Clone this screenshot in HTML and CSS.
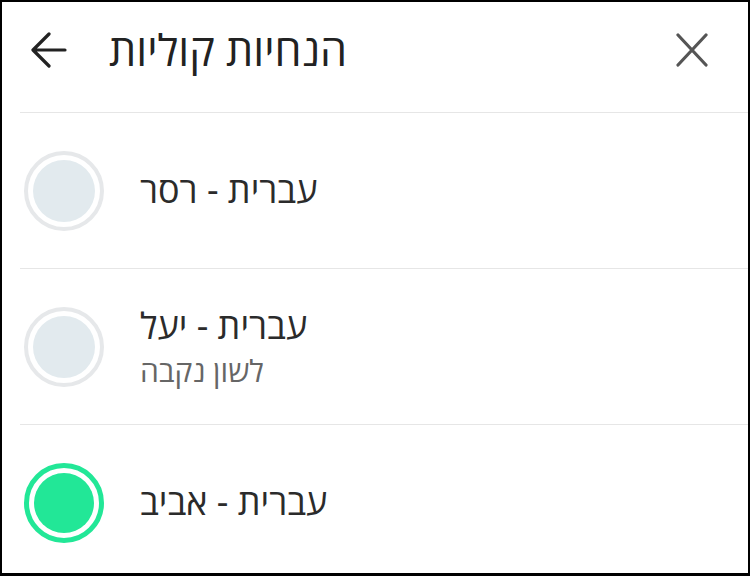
FILE: index.html
```html
<!DOCTYPE html>
<html lang="he">
  <head>
    <meta charset='utf-8' />
    <title>הנחיות קוליות</title>
    <link rel="stylesheet" href="styles.css">
  </head>
  <body>
    <main class='frame'>
      <header class='topbar'>
        <svg class='icon-back' width='36' height='36' viewBox='0 0 36 36'>
          <path d='M34 18H3M18 2L2 18l16 16' fill='none' stroke='#222' stroke-width='3.2' stroke-linecap='round' stroke-linejoin='round'/>
        </svg>
        <h1 class='title'>הנחיות קוליות</h1>
        <svg class='icon-close' width='32' height='34' viewBox='0 0 32 34'>
          <path d='M2 2l28 30M30 2L2 32' fill='none' stroke='#555' stroke-width='3.2' stroke-linecap='round'/>
        </svg>
      </header>
      <ul class='voices'>
        <li class='voice'>
          <span class='radio'></span>
          <div class='label'>
            <div class='name'>עברית - רסר</div>
          </div>
        </li>
        <li class='voice'>
          <span class='radio'></span>
          <div class='label'>
            <div class='name'>עברית - יעל</div>
            <div class='note'>לשון נקבה</div>
          </div>
        </li>
        <li class='voice'>
          <span class='radio selected'></span>
          <div class='label'>
            <div class='name'>עברית - אביב</div>
          </div>
        </li>
      </ul>
    </main>
  </body>
</html>
```

FILE: styles.css
```css
* {
  box-sizing: border-box;
}
body, html {
  margin: 0;
  padding: 0;
  width: 750px;
  height: 576px;
  background: #fff;
}
.frame {
  width: 750px;
  height: 576px;
  border: 2px solid #000;
  border-bottom-width: 3px;
  overflow: hidden;
  font-family: "Open Sans", "DejaVu Sans", sans-serif;
  color: #262626;
}
.topbar {
  height: 110px;
  display: flex;
  align-items: center;
  padding: 0 40px 14px 29px;
}
.title {
  margin: 0 0 0 42px;
  flex: 1;
  font-size: 43px;
  line-height: 1.2;
  font-weight: 400;
  color: #222;
}
.voices {
  list-style: none;
  margin: 0;
  padding: 0;
}
.voice {
  height: 156px;
  margin-left: 18px;
  border-top: 1px solid #e6e6e6;
  display: flex;
  align-items: center;
  padding-left: 4px;
  gap: 36px;
}
.radio {
  width: 80px;
  height: 80px;
  border-radius: 50%;
  border: 4px solid #e6e8ea;
  padding: 5px;
  background: #e2eaee;
  background-clip: content-box;
}
.radio.selected {
  border: 5px solid #22e797;
  background-color: #22e797;
}
.name {
  font-size: 36px;
  line-height: 1.3;
  color: #2b2b2b;
}
.note {
  font-size: 30px;
  line-height: 1.3;
  color: #666;
  margin-top: 2px;
}
```
